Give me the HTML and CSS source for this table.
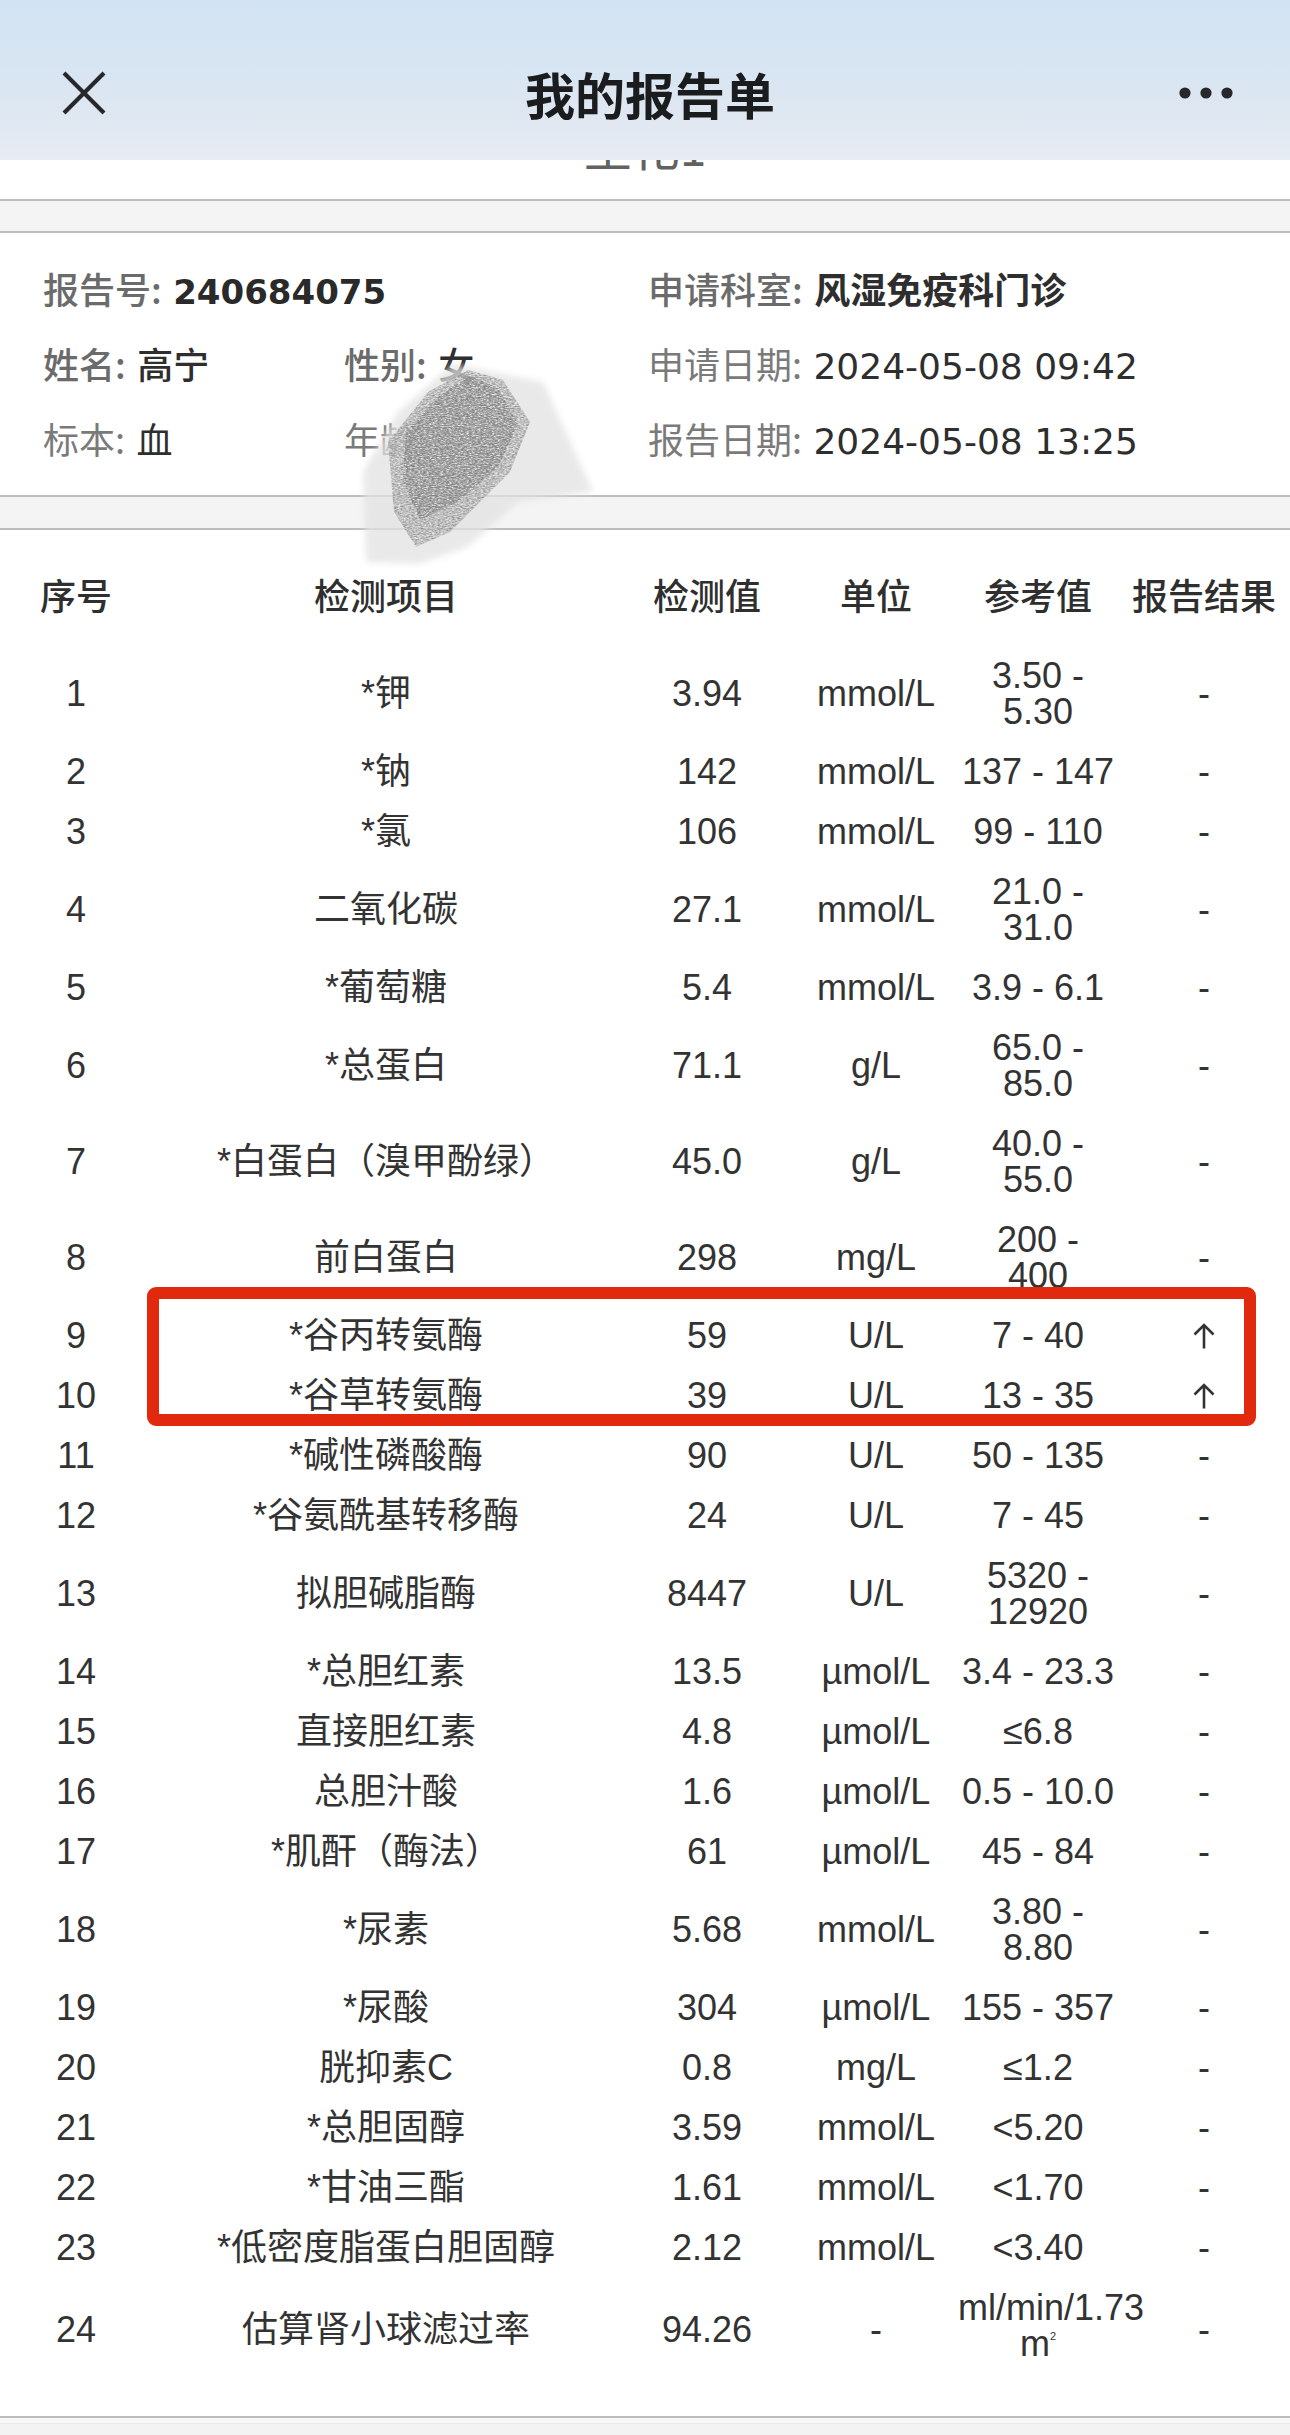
FILE: index.html
```html
<!DOCTYPE html>
<html lang="zh-CN">
<head>
<meta charset="utf-8">
<title>我的报告单</title>
<link rel="stylesheet" href="styles.css">
</head>
<body>
<div class="page">
  <header class="topbar">
    <div class="topbar-row">
      <svg class="icon-close" width="44" height="44" viewBox="0 0 44 44"><path d="M2 2 L42 42 M42 2 L2 42" stroke="#26282b" stroke-width="4.2" fill="none"/></svg>
      <h1 class="topbar-title">我的报告单</h1>
      <svg class="icon-more" width="64" height="14" viewBox="0 0 64 14"><circle cx="11" cy="7" r="5.6" fill="#26282b"/><circle cx="32" cy="7" r="5.6" fill="#26282b"/><circle cx="53" cy="7" r="5.6" fill="#26282b"/></svg>
    </div>
  </header>

  <div class="doc-title"><div class="doc-title-text">生化1</div></div>
  <div class="band band-top"></div>

  <section class="info">
    <div class="info-cell span2"><span class="lbl strong">报告号:</span> <span class="val num-bold">240684075</span></div>
    <div class="info-cell"><span class="lbl strong">申请科室:</span> <span class="val bold">风湿免疫科门诊</span></div>
    <div class="info-cell"><span class="lbl strong">姓名:</span> <span class="val medium">高宁</span></div>
    <div class="info-cell"><span class="lbl strong">性别:</span> <span class="val medium">女</span></div>
    <div class="info-cell"><span class="lbl">申请日期:</span> <span class="val">2024-05-08 09:42</span></div>
    <div class="info-cell"><span class="lbl">标本:</span> <span class="val">血</span></div>
    <div class="info-cell"><span class="lbl">年龄:</span></div>
    <div class="info-cell"><span class="lbl">报告日期:</span> <span class="val">2024-05-08 13:25</span></div>
  </section>

  <div class="band band-mid"></div>

  <section class="results">
    <div class="row head">
      <div>序号</div><div>检测项目</div><div>检测值</div><div>单位</div><div>参考值</div><div>报告结果</div>
    </div>
    <div class="row"><div>1</div><div>*钾</div><div>3.94</div><div>mmol/L</div><div>3.50 - 5.30</div><div>-</div></div>
    <div class="row"><div>2</div><div>*钠</div><div>142</div><div>mmol/L</div><div>137 - 147</div><div>-</div></div>
    <div class="row"><div>3</div><div>*氯</div><div>106</div><div>mmol/L</div><div>99 - 110</div><div>-</div></div>
    <div class="row"><div>4</div><div>二氧化碳</div><div>27.1</div><div>mmol/L</div><div>21.0 - 31.0</div><div>-</div></div>
    <div class="row"><div>5</div><div>*葡萄糖</div><div>5.4</div><div>mmol/L</div><div>3.9 - 6.1</div><div>-</div></div>
    <div class="row"><div>6</div><div>*总蛋白</div><div>71.1</div><div>g/L</div><div>65.0 - 85.0</div><div>-</div></div>
    <div class="row"><div>7</div><div>*白蛋白（溴甲酚绿）</div><div>45.0</div><div>g/L</div><div>40.0 - 55.0</div><div>-</div></div>
    <div class="row"><div>8</div><div>前白蛋白</div><div>298</div><div>mg/L</div><div class="narrow">200 - 400</div><div>-</div></div>
    <div class="row"><div>9</div><div>*谷丙转氨酶</div><div>59</div><div>U/L</div><div>7 - 40</div><div><svg class="arrow-up" width="22" height="26" viewBox="0 0 22 26" aria-label="↑"><path d="M11 25.5 V2 M1.5 11.5 L11 2 L20.5 11.5" stroke="#333" stroke-width="2.6" fill="none"/></svg></div></div>
    <div class="row"><div>10</div><div>*谷草转氨酶</div><div>39</div><div>U/L</div><div>13 - 35</div><div><svg class="arrow-up" width="22" height="26" viewBox="0 0 22 26" aria-label="↑"><path d="M11 25.5 V2 M1.5 11.5 L11 2 L20.5 11.5" stroke="#333" stroke-width="2.6" fill="none"/></svg></div></div>
    <div class="row"><div>11</div><div>*碱性磷酸酶</div><div>90</div><div>U/L</div><div>50 - 135</div><div>-</div></div>
    <div class="row"><div>12</div><div>*谷氨酰基转移酶</div><div>24</div><div>U/L</div><div>7 - 45</div><div>-</div></div>
    <div class="row"><div>13</div><div>拟胆碱脂酶</div><div>8447</div><div>U/L</div><div>5320 - 12920</div><div>-</div></div>
    <div class="row"><div>14</div><div>*总胆红素</div><div>13.5</div><div>µmol/L</div><div>3.4 - 23.3</div><div>-</div></div>
    <div class="row"><div>15</div><div>直接胆红素</div><div>4.8</div><div>µmol/L</div><div>≤6.8</div><div>-</div></div>
    <div class="row"><div>16</div><div>总胆汁酸</div><div>1.6</div><div>µmol/L</div><div>0.5 - 10.0</div><div>-</div></div>
    <div class="row"><div>17</div><div>*肌酐（酶法）</div><div>61</div><div>µmol/L</div><div>45 - 84</div><div>-</div></div>
    <div class="row"><div>18</div><div>*尿素</div><div>5.68</div><div>mmol/L</div><div>3.80 - 8.80</div><div>-</div></div>
    <div class="row"><div>19</div><div>*尿酸</div><div>304</div><div>µmol/L</div><div>155 - 357</div><div>-</div></div>
    <div class="row"><div>20</div><div>胱抑素C</div><div>0.8</div><div>mg/L</div><div>≤1.2</div><div>-</div></div>
    <div class="row"><div>21</div><div>*总胆固醇</div><div>3.59</div><div>mmol/L</div><div>&lt;5.20</div><div>-</div></div>
    <div class="row"><div>22</div><div>*甘油三酯</div><div>1.61</div><div>mmol/L</div><div>&lt;1.70</div><div>-</div></div>
    <div class="row"><div>23</div><div>*低密度脂蛋白胆固醇</div><div>2.12</div><div>mmol/L</div><div>&lt;3.40</div><div>-</div></div>
    <div class="row"><div>24</div><div>估算肾小球滤过率</div><div>94.26</div><div>-</div><div><span class="nowrap">ml/min/1.73</span> m<span class="sup">2</span></div><div>-</div></div>
  </section>

  <div class="band band-bottom"></div>

  <div class="highlight"></div>

  <svg class="scribble" width="250" height="220" viewBox="0 0 250 220">
    <defs>
      <filter id="grain" x="0" y="0" width="100%" height="100%">
        <feTurbulence type="fractalNoise" baseFrequency="0.35 1.1" numOctaves="2" seed="7" result="n"/>
        <feColorMatrix in="n" type="matrix" values="0 0 0 0 0  0 0 0 0 0  0 0 0 0 0  0 0 0 -1.5 1.2" result="a"/>
        <feComposite in="SourceGraphic" in2="a" operator="in"/>
      </filter>
      <filter id="soft" x="-10%" y="-10%" width="120%" height="120%">
        <feGaussianBlur stdDeviation="3"/>
      </filter>
    </defs>
    <path d="M95 12 L185 30 L235 140 L160 150 L110 195 L60 212 L8 210 L5 120 L40 60 Z" fill="#e2e2e2" opacity="0.75" filter="url(#soft)"/>
    <path d="M110 18 L145 28 L172 70 L152 120 L122 150 L92 180 L58 195 L36 160 L30 90 L70 40 Z" fill="#8e8e8e" filter="url(#grain)"/>
    <path d="M112 24 L140 36 L160 72 L140 115 L100 150 L62 168 L45 130 L48 80 L80 45 Z" fill="#7a7a7a" filter="url(#grain)" opacity="0.85"/>
  </svg>
</div>
</body>
</html>
```

FILE: styles.css
```css
* { box-sizing: content-box; }

html, body {
  margin: 0;
  padding: 0;
  background: #ffffff;
}

.page {
  position: relative;
  width: 1290px;
  height: 2435px;
  overflow: hidden;
  background: #ffffff;
  font-family: "Noto Sans CJK SC", sans-serif;
  color: #333333;
}

/* ---------- top bar (overlays the scrolled content) ---------- */
.topbar {
  position: absolute;
  top: 0;
  left: 0;
  right: 0;
  height: 160px;
  z-index: 3;
  background: linear-gradient(180deg, #d2e3f3 0%, #d8e5f2 45%, #e1e8f1 80%, #e7ecf2 100%);
}

.topbar-row {
  display: grid;
  grid-template-columns: 1fr auto 1fr;
  align-items: center;
  height: 70px;
  padding: 58px 52px 0 62px;
}

.icon-close { justify-self: start; display: block; }
.icon-more { justify-self: end; display: block; }

.topbar-title {
  margin: 0;
  font-family: "Noto Sans CJK SC", sans-serif;
  font-size: 50px;
  line-height: 70px;
  font-weight: 700;
  color: #1b1c1e;
}

/* ---------- document title, its top hidden under the bar ---------- */
.doc-title {
  height: 39px;
  margin-top: 160px;
  overflow: hidden;
}

.doc-title-text {
  margin-top: -39px;
  text-align: center;
  font-size: 48px;
  line-height: 48px;
  color: #626262;
}

/* ---------- separator bands ---------- */
.band {
  background: #f4f4f4;
  border-top: 2px solid #bdbdbd;
  border-bottom: 2px solid #bdbdbd;
}
.band-top { height: 30px; }
.band-mid { height: 31px; }
.band-bottom {
  height: 60px;
  border-bottom: none;
  background: linear-gradient(180deg, #f7f7f7 0, #f7f7f7 5px, #e9e9e9 5px, #e9e9e9 6px, #f3f3f3 6px);
}

/* ---------- patient info ---------- */
.info {
  display: grid;
  grid-template-columns: 301px 304px 1fr;
  grid-auto-rows: 36px;
  row-gap: 39px;
  align-items: center;
  padding: 39px 0 37px 43px;
  font-family: "DejaVu Sans", "Noto Sans CJK SC", sans-serif;
  font-size: 36px;
  line-height: 36px;
  white-space: nowrap;
}

.info-cell.span2 { grid-column: span 2; }

.lbl {
  color: #7a7a7a;
  font-family: "Noto Sans CJK SC", sans-serif;
}
.lbl.strong { color: #6b6b6b; font-weight: 500; }

.val { color: #2e2e2e; }
.val.bold { font-family: "Noto Sans CJK SC", sans-serif; font-weight: 700; }
.val.medium { font-family: "Noto Sans CJK SC", sans-serif; font-weight: 500; }
.val.num-bold {
  font-family: "DejaVu Sans", sans-serif;
  font-weight: 700;
  font-size: 34px;
  color: #2a2a2a;
}

/* ---------- results table ---------- */
.results {
  padding: 34px 0 34px;
  font-family: "Liberation Sans", "Noto Sans CJK SC", sans-serif;
  font-size: 36px;
  line-height: 36px;
  color: #333333;
}

.row {
  display: grid;
  grid-template-columns: 152px 468px 174px 164px 160px 1fr;
  align-items: center;
  padding: 12px 0;
  text-align: center;
}

.row.head {
  margin-bottom: 22px;
  font-family: "Noto Sans CJK SC", sans-serif;
  font-weight: 500;
  color: #2f2f2f;
}

.narrow {
  justify-self: center;
  width: 140px;
}

.nowrap { white-space: nowrap; }

.sup {
  position: relative;
  top: -16px;
  font-size: 11px;
}

.arrow-up {
  display: inline-block;
  vertical-align: middle;
  margin-top: -4px;
}

/* ---------- annotations over content ---------- */
.highlight {
  position: absolute;
  left: 147px;
  top: 1287px;
  width: 1085px;
  height: 115px;
  border: 12px solid #e1290d;
  border-radius: 9px;
  z-index: 2;
}

.scribble {
  position: absolute;
  left: 358px;
  top: 352px;
  z-index: 2;
}
```
